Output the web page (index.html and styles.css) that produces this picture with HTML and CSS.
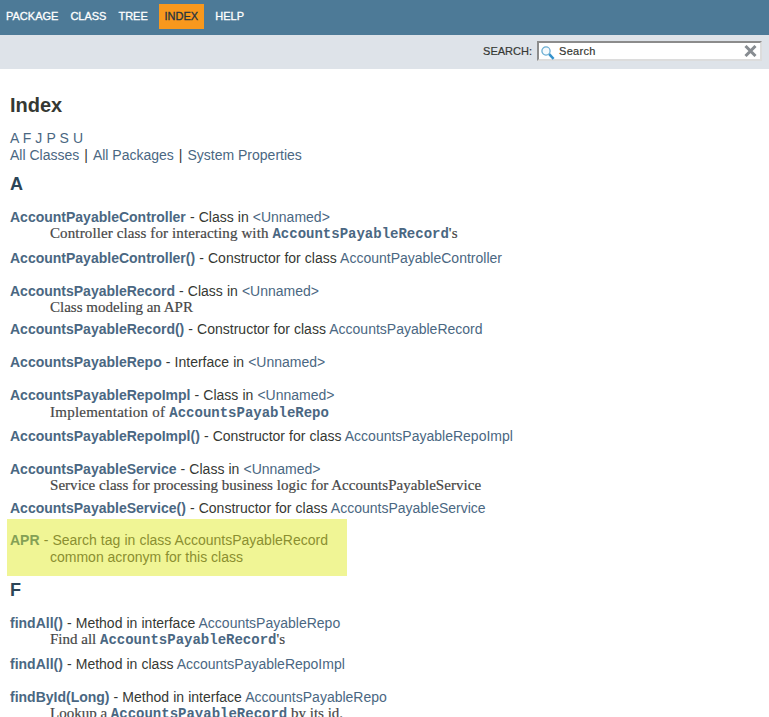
FILE: index.html
```html
<!DOCTYPE html>
<html lang="en">
<head>
<meta charset="utf-8">
<title>Index</title>
<link rel="stylesheet" href="styles.css">
</head>
<body>
<header>
  <nav class="top-nav">
    <a>PACKAGE</a><a>CLASS</a><a>TREE</a><a class="active">INDEX</a><a>HELP</a>
  </nav>
  <div class="sub-nav">
    <label>SEARCH:</label>
    <div class="search-box">
      <svg class="glass" width="14" height="14" viewBox="0 0 14 14"><circle cx="5" cy="5" r="4.1" fill="#f5fafd" stroke="#6baed3" stroke-width="1.3"/><path d="M8.2 8.2L12.6 12.8" stroke="#3592cc" stroke-width="2.5"/></svg>
      <span>Search</span>
      <svg class="clear" width="13" height="12" viewBox="0 0 13 12"><path d="M1.5 1L11.5 11M11.5 1L1.5 11" stroke="#878c91" stroke-width="3"/></svg>
    </div>
  </div>
</header>
<main>
  <h1>Index</h1>
  <div class="links"><span class="letters"><a>A</a> <a>F</a> <a>J</a> <a>P</a> <a>S</a> <a>U</a></span><br><a>All Classes</a><span class="bar">|</span><a>All Packages</a><span class="bar">|</span><a>System Properties</a></div>
  <h2>A</h2>
  <dl>
    <dt><a class="name">AccountPayableController</a> - Class in <a>&lt;Unnamed&gt;</a></dt>
    <dd class="with-code wide">Controller class for interacting with <code>AccountsPayableRecord</code>'s</dd>
    <dt><a class="name">AccountPayableController()</a> - Constructor for class <a>AccountPayableController</a></dt>
    <dd class="empty"></dd>
    <dt><a class="name">AccountsPayableRecord</a> - Class in <a>&lt;Unnamed&gt;</a></dt>
    <dd>Class modeling an APR</dd>
    <dt><a class="name">AccountsPayableRecord()</a> - Constructor for class <a>AccountsPayableRecord</a></dt>
    <dd class="empty"></dd>
    <dt><a class="name">AccountsPayableRepo</a> - Interface in <a>&lt;Unnamed&gt;</a></dt>
    <dd class="empty"></dd>
    <dt><a class="name">AccountsPayableRepoImpl</a> - Class in <a>&lt;Unnamed&gt;</a></dt>
    <dd class="with-code lower">Implementation of <code>AccountsPayableRepo</code></dd>
    <dt><a class="name">AccountsPayableRepoImpl()</a> - Constructor for class <a>AccountsPayableRepoImpl</a></dt>
    <dd class="empty"></dd>
    <dt><a class="name">AccountsPayableService</a> - Class in <a>&lt;Unnamed&gt;</a></dt>
    <dd class="service">Service class for processing business logic for AccountsPayableService</dd>
    <dt><a class="name">AccountsPayableService()</a> - Constructor for class <a>AccountsPayableService</a></dt>
  </dl>
  <dl class="highlight">
    <dt><a class="name">APR</a> - Search tag in class AccountsPayableRecord</dt>
    <dd>common acronym for this class</dd>
  </dl>
  <h2 class="second">F</h2>
  <dl>
    <dt><a class="name">findAll()</a> - Method in interface <a>AccountsPayableRepo</a></dt>
    <dd class="with-code">Find all <code>AccountsPayableRecord</code>'s</dd>
    <dt><a class="name">findAll()</a> - Method in class <a>AccountsPayableRepoImpl</a></dt>
    <dd class="empty"></dd>
    <dt><a class="name">findById(Long)</a> - Method in interface <a>AccountsPayableRepo</a></dt>
    <dd class="with-code">Lookup a <code>AccountsPayableRecord</code> by its id.</dd>
  </dl>
</main>
</body>
</html>
```
FILE: styles.css
```css
body {
  margin: 0;
  height: 717px;
  overflow: hidden;
  background: #fff;
  color: #353833;
  font: 14px/16px "Liberation Sans", Arial, sans-serif;
}
a { color: #4a6782; }
.top-nav {
  display: flex;
  height: 35px;
  box-sizing: border-box;
  padding: 4px 0 0 6px;
  background: #4d7a97;
  font-size: 11px;
  -webkit-text-stroke: 0.3px;
}
.top-nav a {
  height: 25px;
  line-height: 25px;
  margin-right: 12px;
  color: #fff;
}
.top-nav .active {
  width: 45px;
  margin: 0 11.5px 0 -1px;
  text-align: center;
  background: #f8981d;
  color: #253441;
}
.sub-nav {
  display: flex;
  justify-content: flex-end;
  height: 34px;
  box-sizing: border-box;
  padding: 6px 7px 0 0;
  background: #dee3e9;
  font-size: 11px;
  -webkit-text-stroke: 0.2px;
}
.sub-nav label { line-height: 21px; margin-right: 5px; }
.search-box {
  display: flex;
  box-sizing: border-box;
  width: 225px;
  height: 20px;
  padding: 0 3px 0 1px;
  border: 2px solid;
  border-color: #8c8c8c #dcdcdc #dcdcdc #8c8c8c;
  background: #fff;
  line-height: 17px;
  letter-spacing: 0.3px;
}
.glass { margin: 3px 4px 0 1px; }
.clear { margin: 2px 0 0 auto; }
main { padding: 25px 10px 0; }
h1 { margin: 0; font-size: 20px; line-height: 23px; }
.links { margin-top: 13px; line-height: 17px; }
.letters { word-spacing: 0.2px; }
.bar { margin: 0 5px; }
h2 {
  margin: 10px 0 15px;
  color: #2c4557;
  font-size: 18px;
  line-height: 20px;
}
h2.second { margin: 4px 0 15px; }
dl { margin: 0; }
dt { height: 16px; white-space: nowrap; word-spacing: 0.2px; }
.name { font-weight: bold; }
dd {
  height: 22px;
  margin: 0 0 0 40px;
  color: #474747;
  font-family: "Liberation Serif", Georgia, serif;
  font-size: 15px;
  white-space: nowrap;
  -webkit-text-stroke: 0.2px;
}
dd.empty { height: 17px; }
dd.with-code { height: 25px; }
dd.wide { letter-spacing: 0.12px; }
dd.lower { height: 24px; padding-top: 1px; letter-spacing: 0.24px; }
dd.service { height: 23px; letter-spacing: 0.035px; }
code {
  color: #4a6782;
  font-family: "Liberation Mono", "Courier New", monospace;
  font-size: 14px;
  font-weight: bold;
  line-height: 1;
  letter-spacing: 0;
  -webkit-text-stroke: 0;
}
.highlight {
  box-sizing: border-box;
  width: 340px;
  height: 57px;
  margin: 3px 0 0 -3px;
  padding: 13px 3px 0;
  background: #f0f595;
  color: #8b8f30;
}
.highlight .name { color: #84a055; }
.highlight dd {
  padding-top: 1px;
  color: #8b8f30;
  font-family: "Liberation Sans", Arial, sans-serif;
  font-size: 14px;
  -webkit-text-stroke: 0;
}
```
